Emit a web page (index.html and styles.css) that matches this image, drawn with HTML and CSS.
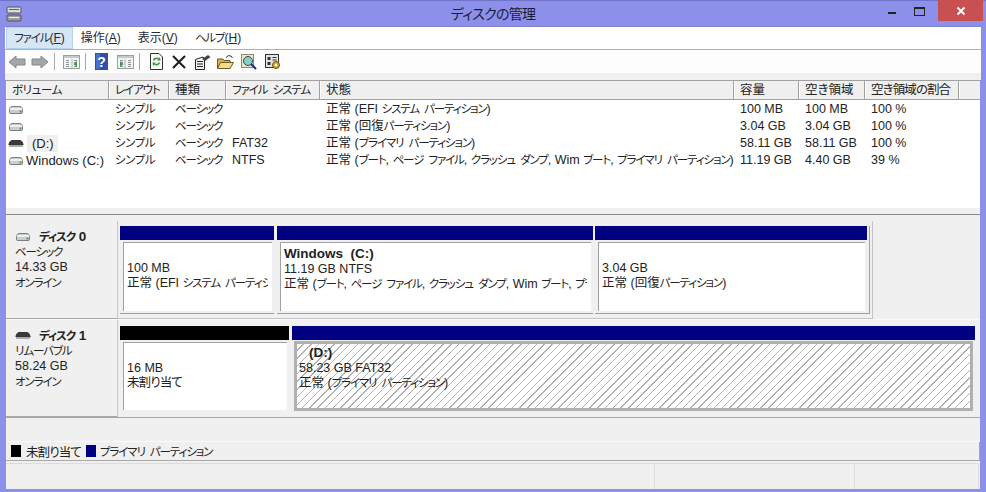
FILE: index.html
```html
<!DOCTYPE html>
<html lang="ja">
<head>
<meta charset="utf-8">
<title>ディスクの管理</title>
<link rel="stylesheet" href="styles.css">
</head>
<body>
<svg class="defs" width="0" height="0" aria-hidden="true">
  <defs>
    <symbol id="drive" viewBox="0 0 16 10">
      <path d="M1.5 4.5 Q2 1.5 4 1.5 H12 Q14 1.5 14.5 4.5 V7.5 Q14.5 8.5 13 8.5 H3 Q1.5 8.5 1.5 7.5 Z" fill="#c9cdcd" stroke="#7b8080"/>
      <rect x="2" y="3" width="12" height="2" fill="#eef0f0"/>
      <rect x="11.5" y="5.5" width="2" height="2" fill="#5a9a6a"/>
    </symbol>
    <symbol id="drive-dark" viewBox="0 0 16 10">
      <path d="M1 5 Q2 1.5 4 1.5 H12 Q14 1.5 15 5 V6 H1 Z" fill="#3a3a3a" stroke="#333"/>
      <rect x="1" y="6" width="14" height="2" rx="1" fill="#a8acac"/>
    </symbol>
    <symbol id="arrow" viewBox="0 0 18 16">
      <path d="M1 8 L8 2 V5 H17 V11 H8 V14 Z" fill="#a3a7a7" stroke="#858989"/>
    </symbol>
    <symbol id="pane" viewBox="0 0 17 16">
      <rect x=".5" y="1.5" width="16" height="13" fill="#f3f5f5" stroke="#9aa0a0"/>
      <rect x="1" y="2" width="15" height="2" fill="#c4c9c9"/>
      <path d="M3 6h3v1H3zM3 8h3v1H3zM3 10h3v1H3zM3 12h3v1H3zM11 6h3v1h-3zM11 8h3v1h-3zM11 10h3v1h-3zM11 12h3v1h-3z" fill="#8c9292"/>
    </symbol>
  </defs>
</svg>
<div class="window">
  <header class="titlebar">
    <svg class="app-icon" width="16" height="16" viewBox="0 0 16 16">
      <rect x="1" y="1" width="14" height="6" rx="1" fill="#d8dbdb" stroke="#555"/>
      <rect x="3" y="3" width="10" height="1" fill="#666"/>
      <rect x="1" y="9" width="14" height="6" rx="1" fill="#9a9ea0" stroke="#555"/>
      <rect x="3" y="11" width="10" height="1" fill="#eee"/>
    </svg>
    <h1 class="title">ディスクの管理</h1>
    <div class="controls">
      <span class="ctl ctl-min"><i class="min-glyph"></i></span>
      <span class="ctl ctl-max"><i class="max-glyph"></i></span>
      <span class="ctl-close">
        <svg width="10" height="10" viewBox="0 0 10 10"><path d="M1.5 1.5 L8.5 8.5 M8.5 1.5 L1.5 8.5" stroke="#fff" stroke-width="2"/></svg>
      </span>
    </div>
  </header>

  <nav class="menubar">
    <span class="menu menu-active"><span class="k">ファイル</span>(<u>F</u>)</span>
    <span class="menu">操作(<u>A</u>)</span>
    <span class="menu">表示(<u>V</u>)</span>
    <span class="menu"><span class="k">ヘルプ</span>(<u>H</u>)</span>
  </nav>

  <div class="toolbar">
    <svg class="tb tb-back" width="18" height="16"><use href="#arrow"/></svg>
    <svg class="tb tb-fwd" width="18" height="16"><use href="#arrow"/></svg>
    <i class="tb-sep"></i>
    <svg class="tb tb-pane1" width="17" height="16" viewBox="0 0 17 16"><use href="#pane" width="17" height="16"/><rect x="8" y="5" width="2" height="9" fill="#d0d4d4"/><path d="M14 7 L10.5 10 L14 13 Z" fill="#3f9a4f"/></svg>
    <i class="tb-sep"></i>
    <svg class="tb tb-help" width="13" height="17" viewBox="0 0 13 17"><rect width="13" height="17" fill="#2f4fa8"/><rect x="1" y="1" width="4" height="15" fill="#4c6fc8"/><text x="6.500" y="14" class="q">?</text></svg>
    <svg class="tb tb-pane2" width="17" height="16" viewBox="0 0 17 16"><use href="#pane" width="17" height="16"/><rect x="7" y="5" width="2" height="9" fill="#d0d4d4"/><path d="M3 7 L6.5 10 L3 13 Z" fill="#3f9a4f"/></svg>
    <i class="tb-sep"></i>
    <svg class="tb tb-refresh" width="15" height="17" viewBox="0 0 15 17"><path d="M1.500 .5 H10 L13.500 4 V16.500 H1.500 Z" fill="#fbfdf8" stroke="#333"/><path d="M4.500 7.500 A3.200 3.200 0 0 1 10 6.500" fill="none" stroke="#3d9a49" stroke-width="1.600"/><path d="M10.500 9.500 A3.200 3.200 0 0 1 5 10.500" fill="none" stroke="#3d9a49" stroke-width="1.600"/><path d="M8 7.500 L11.500 7.500 L11 4 Z M7 9.500 L3.500 9.500 L4 13 Z" fill="#3d9a49"/></svg>
    <svg class="tb tb-x" width="14" height="14" viewBox="0 0 14 14"><path d="M1 1 L13 13 M13 1 L1 13" stroke="#1c1c1c" stroke-width="2"/></svg>
    <svg class="tb tb-prop" width="17" height="16" viewBox="0 0 17 16"><path d="M1.500 5.500 L9 3 L10.500 5.500 V15.500 H1.500 Z" fill="#f4f4f4" stroke="#222"/><path d="M3 7h6v1H3zM3 9.500h6v1H3zM3 12h6v1H3z" fill="#222"/><path d="M8 5 L14 1 L16.500 3 L11 7 Z" fill="#444"/></svg>
    <svg class="tb tb-open" width="17" height="15" viewBox="0 0 17 15"><path d="M.5 5 H6 L7 6.500 H13 V14.500 H.5 Z" fill="#d9b64a" stroke="#6b5a20"/><path d="M.5 14.500 L3.500 8.500 H16.500 L13 14.500 Z" fill="#f2dd8a" stroke="#6b5a20"/><path d="M9 3.500 Q11 .5 14 2 L15.500 4" fill="none" stroke="#333"/></svg>
    <svg class="tb tb-search" width="16" height="16" viewBox="0 0 16 16"><rect x=".5" y=".5" width="12" height="13" fill="#efe7c4" stroke="#8a8a70"/><circle cx="7" cy="7" r="4.500" fill="#7fd0cf" stroke="#444"/><path d="M10 10 L15 15" stroke="#1d2f8a" stroke-width="2"/></svg>
    <svg class="tb tb-settings" width="16" height="16" viewBox="0 0 16 16"><rect x=".5" y=".5" width="13" height="13" fill="#e3e6e6" stroke="#333"/><path d="M2.500 3h3v3h-3zM7.500 3h4v1h-4zM2.500 8h3v3h-3zM7.500 5.500h4v1h-4z" fill="#333"/><circle cx="11" cy="11" r="3.500" fill="#d9a72c" stroke="#6e5510"/><circle cx="11" cy="11" r="1.200" fill="#fff"/></svg>
  </div>

  <section class="list">
    <div class="list-row list-head">
      <span class="hc"><span class="kw">ボリューム</span></span>
      <span class="hc"><span class="k">レイアウト</span></span>
      <span class="hc">種類</span>
      <span class="hc"><span class="k">ファイル システム</span></span>
      <span class="hc">状態</span>
      <span class="hc">容量</span>
      <span class="hc">空き領域</span>
      <span class="hc"><span class="kj">空き領域の割合</span></span>
      <span class="hc hc-end"></span>
    </div>
    <div class="list-body">
      <div class="list-row">
        <span class="vol"><svg class="row-icon" width="16" height="10"><use href="#drive"/></svg></span>
        <span class="c"><span class="kw">シンプル</span></span><span class="c"><span class="k">ベーシック</span></span><span class="c"></span>
        <span class="c c-state">正常 (EFI <span class="k">システム パーティション</span>)</span>
        <span class="c">100 MB</span><span class="c">100 MB</span><span class="c">100 %</span><span></span>
      </div>
      <div class="list-row">
        <span class="vol"><svg class="row-icon" width="16" height="10"><use href="#drive"/></svg></span>
        <span class="c"><span class="kw">シンプル</span></span><span class="c"><span class="k">ベーシック</span></span><span class="c"></span>
        <span class="c c-state">正常 (回復<span class="k">パーティション</span>)</span>
        <span class="c">3.04 GB</span><span class="c">3.04 GB</span><span class="c">100 %</span><span></span>
      </div>
      <div class="list-row">
        <span class="vol"><svg class="row-icon" width="16" height="10"><use href="#drive-dark"/></svg><span class="vol-sel">(D:)</span></span>
        <span class="c"><span class="kw">シンプル</span></span><span class="c"><span class="k">ベーシック</span></span><span class="c">FAT32</span>
        <span class="c c-state">正常 (<span class="k">プライマリ パーティション</span>)</span>
        <span class="c">58.11 GB</span><span class="c">58.11 GB</span><span class="c">100 %</span><span></span>
      </div>
      <div class="list-row">
        <span class="vol"><svg class="row-icon" width="16" height="10"><use href="#drive"/></svg><span class="vol-name">Windows (C:)</span></span>
        <span class="c"><span class="kw">シンプル</span></span><span class="c"><span class="k">ベーシック</span></span><span class="c">NTFS</span>
        <span class="c c-state">正常 (<span class="k">ブート</span>, <span class="k">ページ ファイル</span>, <span class="k">クラッシュ ダンプ</span>, Wim <span class="k">ブート</span>, <span class="k">プライマリ パーティション</span>)</span>
        <span class="c">11.19 GB</span><span class="c">4.40 GB</span><span class="c">39 %</span><span></span>
      </div>
    </div>
    <div class="list-foot"></div>
  </section>

  <section class="disks">
    <div class="disk disk-0">
      <div class="disk-label">
        <div class="disk-name"><svg width="16" height="10"><use href="#drive"/></svg><b><span class="k">ディスク</span> 0</b></div>
        <div><span class="k">ベーシック</span></div><div>14.33 GB</div><div><span class="k">オンライン</span></div>
      </div>
      <div class="parts parts-0">
        <article class="part p-efi">
          <div class="bar"></div>
          <div class="pbody"><div class="pl">&nbsp;</div><div class="pl">100 MB</div><div class="pl">正常 (EFI <span class="k">システム パーティション</span>)</div></div>
        </article>
        <article class="part p-win">
          <div class="bar"></div>
          <div class="pbody"><div class="pl"><b>Windows&nbsp; (C:)</b></div><div class="pl">11.19 GB NTFS</div><div class="pl">正常 (<span class="k">ブート</span>, <span class="k">ページ ファイル</span>, <span class="k">クラッシュ ダンプ</span>, Wim <span class="k">ブート</span>, <span class="k">プライマリ パーティション</span>)</div></div>
        </article>
        <article class="part p-rec">
          <div class="bar"></div>
          <div class="pbody"><div class="pl">&nbsp;</div><div class="pl">3.04 GB</div><div class="pl">正常 (回復<span class="k">パーティション</span>)</div></div>
        </article>
      </div>
    </div>
    <div class="disk disk-1">
      <div class="disk-label">
        <div class="disk-name"><svg width="16" height="10"><use href="#drive-dark"/></svg><b><span class="k">ディスク</span> 1</b></div>
        <div><span class="k">リムーバブル</span></div><div>58.24 GB</div><div><span class="k">オンライン</span></div>
      </div>
      <div class="parts parts-1">
        <article class="part p-free">
          <div class="bar bar-black"></div>
          <div class="pbody"><div class="pl">&nbsp;</div><div class="pl">16 MB</div><div class="pl"><span class="kj">未割り当て</span></div></div>
        </article>
        <article class="part p-d">
          <div class="bar"></div>
          <div class="pbody pbody-hatch"><div class="pl pl-d"><b>(D:)</b></div><div class="pl">58.23 GB FAT32</div><div class="pl">正常 (<span class="k">プライマリ パーティション</span>)</div></div>
        </article>
      </div>
    </div>
  </section>

  <div class="legend-space"></div>
  <div class="legend">
    <i class="swatch swatch-black"></i><span class="kj">未割り当て</span>
    <i class="swatch swatch-navy"></i><span class="k">プライマリ パーティション</span>
  </div>
  <footer class="status">
    <span class="st st-a"></span><span class="st st-b"></span><span class="st st-c"></span>
  </footer>
</div>
</body>
</html>
```

FILE: styles.css
```css
* { box-sizing: border-box; }
html, body { margin: 0; height: 100%; overflow: hidden; }
.defs { position: absolute; }
body {
  font-family: "Liberation Sans", "Noto Sans CJK JP", sans-serif;
  font-size: 12.500px;
  font-feature-settings: "palt";
  color: #222;
}
.k { font-size: 11.500px; letter-spacing: -1.100px; word-spacing: 3px; }
.kw { font-size: 11.500px; letter-spacing: -.4px; }
.kj { letter-spacing: -.9px; }
.window {
  height: 492px;
  background: #8c90ea;
  padding: 0 5px 3px 5px;
  display: flex;
  flex-direction: column;
  border-top: 1px solid #7074c8;
}
.titlebar {
  height: 25px;
  flex: none;
  position: relative;
  display: flex;
  align-items: flex-start;
  justify-content: center;
}
.app-icon { position: absolute; left: 1px; top: 5px; }
.title {
  margin: 4px 0 0;
  font-size: 14px;
  font-weight: 400;
  line-height: 18px;
  color: #1c1c30;
  letter-spacing: -.7px;
}
.controls {
  position: absolute;
  right: -2px;
  top: -1px;
  display: flex;
  height: 21px;
}
.ctl { width: 27px; position: relative; display: block; }
.min-glyph { position: absolute; left: 4px; top: 12px; width: 8px; height: 2px; background: #222; }
.max-glyph { position: absolute; left: 3px; top: 7px; width: 11px; height: 9px; border: 1px solid #222; border-top-width: 2px; }
.ctl-close {
  width: 45px;
  background: #c75050;
  display: flex;
  align-items: center;
  justify-content: center;
}
.menubar {
  flex: none;
  height: 24px;
  background: #fff;
  border-top: 1px solid #7f83c8;
  border-bottom: 1px solid #b0b0b0;
  display: flex;
  align-items: stretch;
  padding-left: 1px;
  color: #1e2a3a;
}
.menu { padding: 0 8px; line-height: 22px; margin-right: 1px; font-size: 12px; }
.menu u { text-underline-offset: 1px; }
.menu-active {
  background: #d5e6f6;
  border: 1px solid #b5d2ec;
  line-height: 20px;
  padding: 0 7px;
  margin-right: 0;
}
.toolbar {
  flex: none;
  height: 23px;
  background: #fdfdfd;
  display: flex;
  align-items: center;
  padding-left: 3px;
}
.tb { flex: none; display: block; }
.tb-back { margin-right: 5px; }
.tb-fwd { transform: scaleX(-1); margin-right: 5px; }
.tb-sep { width: 1px; height: 17px; background: #a8a8a8; margin: 0 8px 0 0; flex: none; }
.tb-pane1 { margin-right: 5px; }
.tb-help { margin: 0 9px 0 1px; }
.tb-pane2 { margin-right: 5px; }
.tb-refresh { margin: 0 8px 0 1px; }
.tb-x { margin-right: 8px; }
.tb-prop { margin-right: 6px; }
.tb-open { margin-right: 7px; }
.tb-search { margin-right: 8px; }
.q { font: 700 14px "Liberation Sans", sans-serif; fill: #fff; text-anchor: middle; }

.list {
  flex: none;
  margin-top: 7px;
  height: 135px;
  margin-left: 1px;
  margin-right: 1px;
  border-top: 1px solid #a0a0a0;
  border-bottom: 1px solid #8a8a8a;
  background: #f0f0f0;
  display: flex;
  flex-direction: column;
}
.list-row {
  display: grid;
  grid-template-columns: 103px 60px 57px 94px 414px 65px 66px 94px 1fr;
  height: 17px;
  line-height: 17px;
  white-space: nowrap;
}
.list-head {
  height: 19px;
  flex: none;
  background: #f0f0f0;
  border-bottom: 1px solid #a0a0a0;
}
.hc {
  padding-left: 5px;
  line-height: 18px;
  border-right: 1px solid #a0a0a0;
  border-left: 1px solid #fff;
  color: #222;
  overflow: hidden;
}
.hc-end { border-right: 0; }
.list-body { flex: 1; background: #fff; padding-top: 1px; }
.list-foot { flex: none; height: 6px; background: #f0f0f0; }
.vol { display: flex; align-items: center; padding-left: 2px; }
.row-icon { flex: none; }
.vol-sel { background: #f0f0f0; margin-left: 3px; padding: 0 4px 0 5px; font-size: 13px; }
.vol-name { margin-left: 2px; font-size: 13px; }
.c { padding-left: 6px; overflow: hidden; }

.disks { flex: none; height: 203px; padding-top: 6px; margin-left: 1px; margin-right: 1px; border-bottom: 1px solid #a8a8a8; }
.disk { display: flex; }
.disk-0 { height: 98px; }
.disk-1 { height: 98px; border-top: 1px solid #fafafa; }
.disk-label {
  width: 112px;
  flex: none;
  padding: 8px 0 0 9px;
  line-height: 15.300px;
  color: #222;
  border-right: 1px solid #c8c8c8;
  border-bottom: 1px solid #a8a8a8;
}
.disk-name { display: flex; align-items: center; gap: 8px; height: 16px; font-size: 13.500px; }
.parts { display: flex; padding: 5px 0 0 2px; border-right: 1px solid #c4c4c4; border-bottom: 1px solid #c4c4c4; }
.parts-0 { width: 755px; padding-bottom: 3px; }
.parts-0 .part { height: 88px; }
.parts-1 { width: 862px; border: 0; padding-top: 6px; }
.part { display: flex; flex-direction: column; flex: none; border-bottom: 1px solid #a0a0a0; }
.p-efi { width: 154px; margin-right: 3px; }
.p-win { width: 316px; margin-right: 2px; }
.p-rec { width: 275px; border-right: 1px solid #a0a0a0; padding-right: 2px; }
.p-free { width: 169px; margin-right: 3px; height: 86px; border: 0; }
.p-d { width: 683px; height: 86px; border: 0; }
.bar { height: 14px; flex: none; background: #000080; }
.bar-black { background: #000; }
.pbody {
  margin: 2px 2px 0 3px;
  height: 69px;
  background: #fff;
  border-top: 1px solid #a0a0a0;
  border-left: 1px solid #a0a0a0;
  padding: 3px 4px 0 3px;
  overflow: hidden;
}
.parts-1 .pbody { height: 68px; }
.pl { line-height: 15px; white-space: nowrap; overflow: hidden; }
.pl b { font-size: 13.500px; }
.parts-1 .pbody.pbody-hatch {
  margin: 1px 2px 0 2px;
  border: 3px solid #b0b0b0;
  padding: 1px 0 0 2px;
  height: 70px;
  background: repeating-linear-gradient(-45deg, #fff 0, #fff 4.500px, #b4b4b4 4.500px, #b4b4b4 5.500px);
}
.pl-d { padding-left: 10px; }
.legend-space { height: 24px; flex: none; border-bottom: 1px solid #fafafa; margin: 0 1px; }
.legend {
  flex: none;
  height: 19px;
  margin: 0 1px;
  display: flex;
  align-items: center;
  padding-left: 5px;
  border-right: 1px solid #a8a8a8;
  border-bottom: 1px solid #a8a8a8;
}
.swatch { width: 10px; height: 12px; flex: none; margin-right: 5px; }
.swatch-black { background: #000; }
.swatch-navy { background: #000080; margin-left: 5px; margin-right: 4px; }
.status {
  flex: 1;
  display: flex;
  padding: 2px 1px 0 0;
  background: #f0f0f0;
  margin: 0 1px;
}
.st { display: block; border-right: 1px solid #dcdcdc; border-top: 1px solid #dcdcdc; }
.st-a { width: 649px; }
.st-b { width: 200px; }
.st-c { flex: 1; }
.disks, .legend-space, .legend { background: #f0f0f0; }
.toolbar { box-shadow: 0 7px 0 #f0f0f0; }
```
